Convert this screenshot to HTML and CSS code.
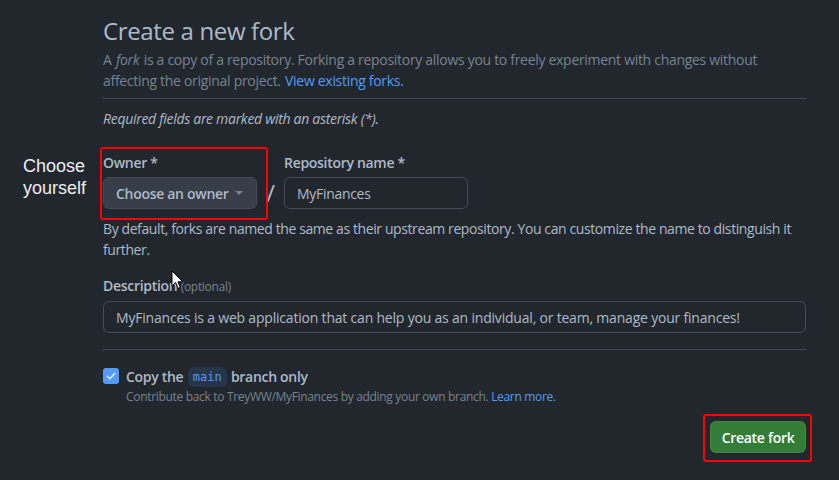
FILE: index.html
```html
<!DOCTYPE html>
<html lang="en">
<head>
<meta charset="utf-8">
<title>Create a new fork</title>
<link rel="stylesheet" href="styles.css">
</head>
<body>
<main class="page">
  <div class="subhead">
    <h1 class="subhead-heading">Create a new fork</h1>
    <p class="subhead-desc"><span>A </span><em class="em">fork</em><span> is a copy of a repository. Forking a repository allows you to freely experiment with changes without</span><br><span>affecting the original project. </span><a href="#" class="link desc-link">View existing forks.</a></p>
  </div>
  <p class="required-note">Required fields are marked with an asterisk (*).</p>

  <div class="name-row">
    <div class="field">
      <label class="label">Owner *</label>
      <button class="owner-btn" type="button">Choose an owner <span class="caret"></span></button>
    </div>
    <span class="slash">/</span>
    <div class="field">
      <label class="label">Repository name *</label>
      <div class="input repo-input">MyFinances</div>
    </div>
  </div>
  <p class="note">By default, forks are named the same as their upstream repository. You can customize the name to distinguish it further.</p>

  <div class="field desc-field">
    <label class="label">Description <span class="optional">(optional)</span></label>
    <div class="input desc-input">MyFinances is a web application that can help you as an individual, or team, manage your finances!</div>
  </div>

  <hr class="divider">

  <div class="check-row">
    <span class="checkbox">
      <svg width="12" height="12" viewBox="0 0 12 12"><path d="M2.2 6.2 L4.8 8.8 L9.8 3.4" fill="none" stroke="#dbe6f3" stroke-width="1.6" stroke-linecap="round" stroke-linejoin="round"/></svg>
    </span>
    <div class="check-text">
      <div class="check-label">Copy the <code class="branch">main</code> branch only</div>
      <div class="check-sub">Contribute back to TreyWW/MyFinances by adding your own branch. <a href="#" class="link">Learn more.</a></div>
    </div>
  </div>

  <div class="actions">
    <button class="create-btn" type="button">Create fork</button>
  </div>
</main>

<div class="annotation">Choose<br>yourself</div>
<div class="redbox redbox-owner"></div>
<div class="redbox redbox-create"></div>
<svg class="cursor" width="13" height="20" viewBox="0 0 13 20"><path d="M1 1 L1 16 L4.6 12.6 L7.2 18.4 L9.4 17.4 L6.9 11.8 L11.8 11.8 Z" fill="#ffffff" stroke="#000000" stroke-width="1" stroke-linejoin="round"/></svg>
</body>
</html>
```

FILE: styles.css
```css
* { box-sizing: border-box; }
html, body { margin: 0; padding: 0; }
body {
  background: #22272e;
  color: #adbac7;
  font-family: "Open Sans", "Noto Sans", sans-serif;
  font-size: 14px;
  line-height: 21px;
  letter-spacing: -0.3px;
  width: 839px;
  height: 480px;
  overflow: hidden;
  position: relative;
}
.page {
  margin-left: 103px;
  width: 703px;
  padding-top: 13px;
}
.subhead {
  border-bottom: 1px solid #444c56;
  padding-bottom: 7px;
}
.subhead-heading {
  margin: 0;
  font-size: 24px;
  line-height: 36px;
  font-weight: 500;
  letter-spacing: -0.35px;
  color: #adbac7;
}
.subhead-desc {
  margin: 0;
  color: #768390;
  white-space: nowrap;
}
.em { padding: 0 1px; }
.link { color: #539bf5; text-decoration: none; }
.desc-link { margin-left: 1px; }
.required-note {
  margin: 9px 0 0;
  font-style: italic;
  color: #adbac7;
}
.name-row {
  display: flex;
  align-items: flex-end;
  margin-top: 23px;
}
.field { display: flex; flex-direction: column; }
.label {
  font-weight: 600;
  color: #adbac7;
  margin-bottom: 4px;
}
.owner-btn {
  display: flex;
  align-items: center;
  width: 154px;
  height: 32px;
  padding: 0 12px;
  background: #373e47;
  border: 1px solid #444c56;
  border-radius: 6px;
  color: #adbac7;
  font-family: inherit;
  font-size: 14px;
  font-weight: 600;
  letter-spacing: -0.3px;
}
.caret {
  margin-left: auto;
  width: 0; height: 0;
  border-left: 4px solid transparent;
  border-right: 4px solid transparent;
  border-top: 4px solid #768390;
  margin-right: 1px;
}
.slash {
  width: 27px;
  text-align: center;
  font-size: 24px;
  line-height: 32px;
  color: #adbac7;
  height: 32px;
}
.input {
  height: 32px;
  border: 1px solid #444c56;
  border-radius: 6px;
  background: #22272e;
  padding: 0 12px;
  display: flex;
  align-items: center;
  color: #adbac7;
}
.repo-input { width: 184px; }
.note {
  margin: 9px 0 0;
  color: #adbac7;
  letter-spacing: -0.4px;
}
.desc-field { margin-top: 15px; }
.optional {
  font-size: 12px;
  font-weight: 400;
  color: #768390;
}
.desc-input { width: 703px; letter-spacing: -0.2px; }
.divider {
  border: 0;
  border-top: 1px solid #444c56;
  margin: 16px 0 0;
  height: 0;
}
.check-row {
  display: flex;
  margin-top: 17px;
}
.checkbox {
  width: 16px; height: 16px;
  border-radius: 3px;
  background: #539bf5;
  display: flex; align-items: center; justify-content: center;
  margin-top: 1px;
  margin-right: 7px;
}
.check-label {
  font-weight: 600;
  color: #adbac7;
  line-height: 20px;
}
.branch {
  display: inline-block;
  font-family: "DejaVu Sans Mono", "Liberation Mono", monospace;
  font-size: 12px;
  line-height: 20px;
  font-weight: 400;
  letter-spacing: 0;
  color: #539bf5;
  background: rgba(65, 132, 228, 0.15);
  border-radius: 6px;
  padding: 0 5px;
  margin: 0 1px;
  vertical-align: top;
}
.check-sub {
  font-size: 12px;
  line-height: 18px;
  letter-spacing: -0.32px;
  color: #768390;
  margin-top: 1px;
}
.actions {
  display: flex;
  justify-content: flex-end;
  margin-top: 15px;
}
.create-btn {
  width: 96px;
  height: 32px;
  background: #347d39;
  border: 1px solid rgba(205, 217, 229, 0.1);
  border-radius: 6px;
  color: #ffffff;
  font-family: inherit;
  font-size: 14px;
  font-weight: 600;
  letter-spacing: -0.3px;
}
.annotation {
  position: absolute;
  left: 23px;
  top: 155px;
  font-family: "Liberation Sans", Arial, sans-serif;
  font-size: 18px;
  line-height: 22px;
  letter-spacing: 0;
  color: #eeeeee;
}
.redbox {
  position: absolute;
  border: 2px solid #ff0000;
  border-radius: 3px;
}
.redbox-owner { left: 100px; top: 147px; width: 168px; height: 73px; }
.redbox-create { left: 703px; top: 414px; width: 109px; height: 48px; }
.cursor { position: absolute; left: 171px; top: 270px; }
```
